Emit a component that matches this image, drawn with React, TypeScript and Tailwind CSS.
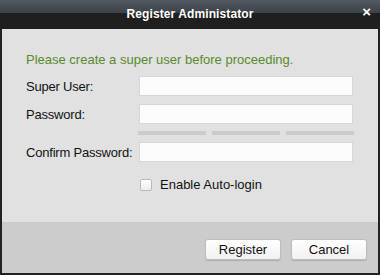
import React from "react";

const font = { fontFamily: '"Liberation Sans", Arial, sans-serif' };

const Field: React.FC<{ label: string; className?: string }> = ({ label, className }) => (
  <div className={`flex items-center h-[20px] ${className ?? ""}`}>
    <label className="w-[113px] text-[13px] text-[#111] leading-none tracking-[-0.2px]">{label}</label>
    <input
      type="password"
      className="w-[214px] h-[20px] bg-[#fcfcfc] border border-[#d6d6d6] outline-none"
    />
  </div>
);

const App: React.FC = () => {
  return (
    <div className="w-[380px] h-[275px] bg-[#222] flex flex-col" style={font}>
      <div className="relative h-[29px] flex items-center justify-center bg-[linear-gradient(to_bottom,#535961_0%,#3d4249_44%,#1f1f1f_44%,#1f1f1f_100%)]">
        <span className="text-white font-bold text-[12px] -mt-[2px] tracking-[0.1px]">Register Administator</span>
        <span className="absolute right-[9px] top-[4px] text-white font-bold text-[15px] leading-none">
          ×
        </span>
      </div>
      <div className="flex-1 mx-[2px] mb-[2px] flex flex-col">
        <div className="h-[193px] bg-[#e1e1e1] pl-[24px] pt-[23px]">
          <p className="text-[13px] text-[#588a2e] leading-[15px]">
            Please create a super user before proceeding.
          </p>
          <Field label="Super User:" className="mt-[9px]" />
          <Field label="Password:" className="mt-[8px]" />
          <div className="ml-[112px] mt-[7px] flex gap-[6px]">
            <div className="w-[68px] h-[4px] bg-[#cbcbcb]" />
            <div className="w-[68px] h-[4px] bg-[#cbcbcb]" />
            <div className="w-[68px] h-[4px] bg-[#cbcbcb]" />
          </div>
          <Field label="Confirm Password:" className="mt-[7px]" />
          <div className="ml-[114px] mt-[13px] flex items-center gap-[8px]">
            <span className="w-[12px] h-[12px] rounded-[2px] border border-[#b9b9b9] bg-[linear-gradient(to_bottom,#ffffff,#ececec)]" />
            <span className="text-[13px] text-[#111]">Enable Auto-login</span>
          </div>
        </div>
        <div className="flex-1 bg-[#cccccc] flex justify-end items-start pt-[17px] pr-[11px] gap-[10px]">
          <button className="w-[76px] h-[21px] rounded-[3px] border border-[#bdbdbd] bg-[linear-gradient(to_bottom,#ffffff,#f1f1f1)] shadow-[0_1px_1px_rgba(0,0,0,0.15)] text-[13px] text-[#111]">
            Register
          </button>
          <button className="w-[76px] h-[21px] rounded-[3px] border border-[#bdbdbd] bg-[linear-gradient(to_bottom,#ffffff,#f1f1f1)] shadow-[0_1px_1px_rgba(0,0,0,0.15)] text-[13px] text-[#111]">
            Cancel
          </button>
        </div>
      </div>
    </div>
  );
};

export default App;
